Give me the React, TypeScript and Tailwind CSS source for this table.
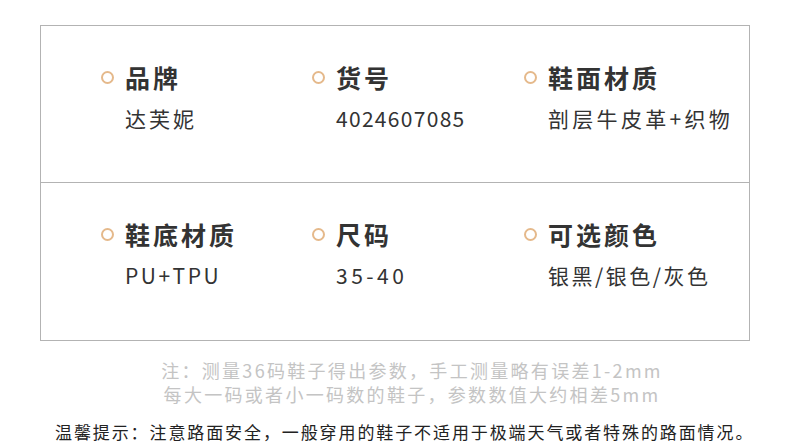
const specs = [
  [
    { label: "品牌", value: "达芙妮", track: "tracking-[3px]" },
    { label: "货号", value: "4024607085", track: "tracking-[1.3px]" },
    { label: "鞋面材质", value: "剖层牛皮革+织物", track: "tracking-[3.3px]" },
  ],
  [
    { label: "鞋底材质", value: "PU+TPU", track: "tracking-[2.5px]" },
    { label: "尺码", value: "35-40", track: "tracking-[3.5px]" },
    { label: "可选颜色", value: "银黑/银色/灰色", track: "tracking-[2.5px]" },
  ],
];

const font = { fontFamily: '"Noto Sans CJK SC", "Noto Sans", sans-serif' };

const Spec = ({ label, value, track }: { label: string; value: string; track: string }) => (
  <div className="flex flex-col">
    <div className="flex items-center h-[30px]">
      <span className="shrink-0 w-[13px] h-[13px] rounded-full border-2 border-[#e5b98b] mr-[11px]" />
      <span className="text-[25px] leading-[30px] font-bold tracking-[3px] text-[#333]">{label}</span>
    </div>
    <div className={`pl-[24px] mt-[12px] text-[21px] leading-[28px] text-[#333] ${track}`}>{value}</div>
  </div>
);

export default function App() {
  return (
    <div className="w-[790px] h-[444px] bg-white overflow-hidden" style={font}>
      <div className="ml-[40px] mt-[25px] w-[710px] border border-[#b3b3b3]">
        {specs.map((row, i) => (
          <div
            key={i}
            className={`grid grid-cols-[211px_212px_1fr] pl-[60px] h-[157px] pt-[36px] ${i === 0 ? "border-b border-[#b3b3b3]" : ""}`}
          >
            {row.map((s) => (
              <Spec key={s.label} {...s} />
            ))}
          </div>
        ))}
      </div>

      <div className="mt-[17px] pl-[34px] text-center text-[18px] leading-[24px] tracking-[2.3px] text-[#c4c4c4]">
        <p>注：测量36码鞋子得出参数，手工测量略有误差1-2mm</p>
        <p>每大一码或者小一码数的鞋子，参数数值大约相差5mm</p>
      </div>

      <p className="mt-[14px] pl-[55px] text-[17px] leading-[24px] tracking-[1.9px] text-[#222]">
        温馨提示：注意路面安全，一般穿用的鞋子不适用于极端天气或者特殊的路面情况。
      </p>
    </div>
  );
}
